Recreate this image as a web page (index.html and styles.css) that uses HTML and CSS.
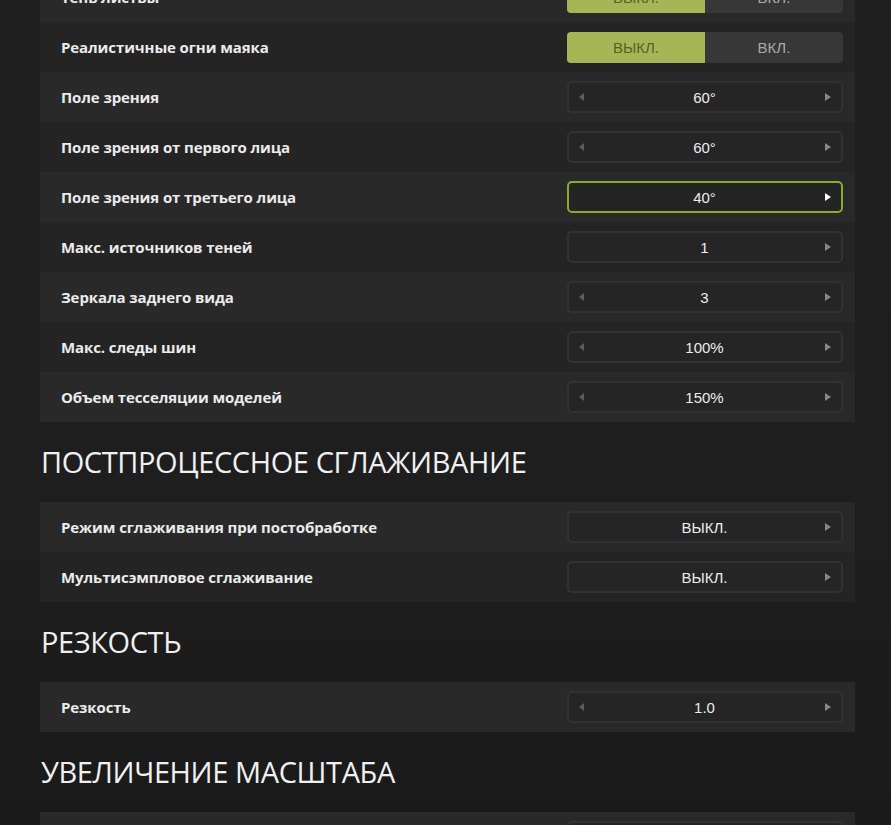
FILE: index.html
```html
<!DOCTYPE html>
<html lang="ru">
<head>
  <meta charset="UTF-8">
  <title>Настройки графики</title>
  <link rel="stylesheet" href="styles.css">
</head>
<body>
  <div class="settings">

    <div class="group group-first">
      <div class="row">
        <span class="label">Тень листвы</span>
        <div class="toggle"><span class="opt on">ВЫКЛ.</span><span class="opt">ВКЛ.</span></div>
      </div>
      <div class="row">
        <span class="label">Реалистичные огни маяка</span>
        <div class="toggle"><span class="opt on">ВЫКЛ.</span><span class="opt">ВКЛ.</span></div>
      </div>
      <div class="row">
        <span class="label">Поле зрения</span>
        <div class="picker"><span class="arrow left"></span><span class="value">60°</span><span class="arrow right"></span></div>
      </div>
      <div class="row">
        <span class="label">Поле зрения от первого лица</span>
        <div class="picker"><span class="arrow left"></span><span class="value">60°</span><span class="arrow right"></span></div>
      </div>
      <div class="row">
        <span class="label">Поле зрения от третьего лица</span>
        <div class="picker focused"><span class="arrow left hidden"></span><span class="value">40°</span><span class="arrow right"></span></div>
      </div>
      <div class="row">
        <span class="label">Макс. источников теней</span>
        <div class="picker"><span class="arrow left hidden"></span><span class="value">1</span><span class="arrow right"></span></div>
      </div>
      <div class="row">
        <span class="label">Зеркала заднего вида</span>
        <div class="picker"><span class="arrow left"></span><span class="value">3</span><span class="arrow right"></span></div>
      </div>
      <div class="row">
        <span class="label">Макс. следы шин</span>
        <div class="picker"><span class="arrow left"></span><span class="value">100%</span><span class="arrow right"></span></div>
      </div>
      <div class="row">
        <span class="label">Объем тесселяции моделей</span>
        <div class="picker"><span class="arrow left"></span><span class="value">150%</span><span class="arrow right"></span></div>
      </div>
    </div>

    <h2 class="section-title">ПОСТПРОЦЕССНОЕ СГЛАЖИВАНИЕ</h2>
    <div class="group">
      <div class="row">
        <span class="label">Режим сглаживания при постобработке</span>
        <div class="picker"><span class="arrow left hidden"></span><span class="value">ВЫКЛ.</span><span class="arrow right"></span></div>
      </div>
      <div class="row">
        <span class="label">Мультисэмпловое сглаживание</span>
        <div class="picker"><span class="arrow left hidden"></span><span class="value">ВЫКЛ.</span><span class="arrow right"></span></div>
      </div>
    </div>

    <h2 class="section-title">РЕЗКОСТЬ</h2>
    <div class="group">
      <div class="row">
        <span class="label">Резкость</span>
        <div class="picker"><span class="arrow left"></span><span class="value">1.0</span><span class="arrow right"></span></div>
      </div>
    </div>

    <h2 class="section-title">УВЕЛИЧЕНИЕ МАСШТАБА</h2>
    <div class="group">
      <div class="row">
        <span class="label">Масштабирование</span>
        <div class="picker"><span class="arrow left"></span><span class="value">100%</span><span class="arrow right"></span></div>
      </div>
    </div>

  </div>
</body>
</html>
```

FILE: styles.css
```css
html, body {
  height: 100%;
}

body {
  margin: 0;
  overflow: hidden;
  background: linear-gradient(180deg, #1f1f1f 0%, #1e1e1e 60%, #1a1a1a 100%);
  font-family: 'Open Sans', 'Noto Sans', sans-serif;
  color: #ececec;
}

.settings {
  width: 815px;
  padding-left: 40px;
}

/* the list is scrolled, the first row is cut at the top */
.group-first {
  margin-top: -28px;
}

.row {
  display: flex;
  align-items: center;
  justify-content: space-between;
  height: 50px;
  padding: 0 12px 0 21px;
  background: #292929;
}

.row:nth-child(even) {
  background: #242424;
}

.label {
  font-size: 15px;
  font-weight: 700;
  letter-spacing: -0.1px;
  color: #ebebeb;
}

.section-title {
  margin: 0;
  height: 80px;
  line-height: 80px;
  padding-left: 1px;
  font-size: 29px;
  font-weight: 400;
  letter-spacing: -0.4px;
  color: #f0f0f0;
}

/* on / off switch */
.toggle {
  display: flex;
  width: 276px;
  height: 31px;
  border-radius: 4px;
  overflow: hidden;
  background: #373737;
}

.opt {
  flex: 1;
  display: flex;
  align-items: center;
  justify-content: center;
  font-family: 'Liberation Sans', Arial, sans-serif;
  font-size: 15px;
  color: #a9a9a9;
}

.opt.on {
  background: #a6b656;
  color: #55622a;
}

/* value picker with arrows */
.picker {
  display: flex;
  align-items: center;
  justify-content: space-between;
  box-sizing: border-box;
  width: 276px;
  height: 32px;
  padding: 0 10px;
  border: 2px solid #323232;
  border-radius: 5px;
  background: #252525;
}

.picker.focused {
  border-color: #8fa92c;
  background: #242424;
}

.value {
  font-family: 'Liberation Sans', Arial, sans-serif;
  font-size: 15px;
  color: #ececec;
}

.arrow {
  width: 0;
  height: 0;
  border-top: 4px solid transparent;
  border-bottom: 4px solid transparent;
}

.arrow.left {
  border-right: 5px solid #5e5e5e;
}

.arrow.right {
  border-left: 6px solid #868686;
}

.arrow.hidden {
  visibility: hidden;
}

.focused .arrow.right {
  border-left-color: #ffffff;
}
```
